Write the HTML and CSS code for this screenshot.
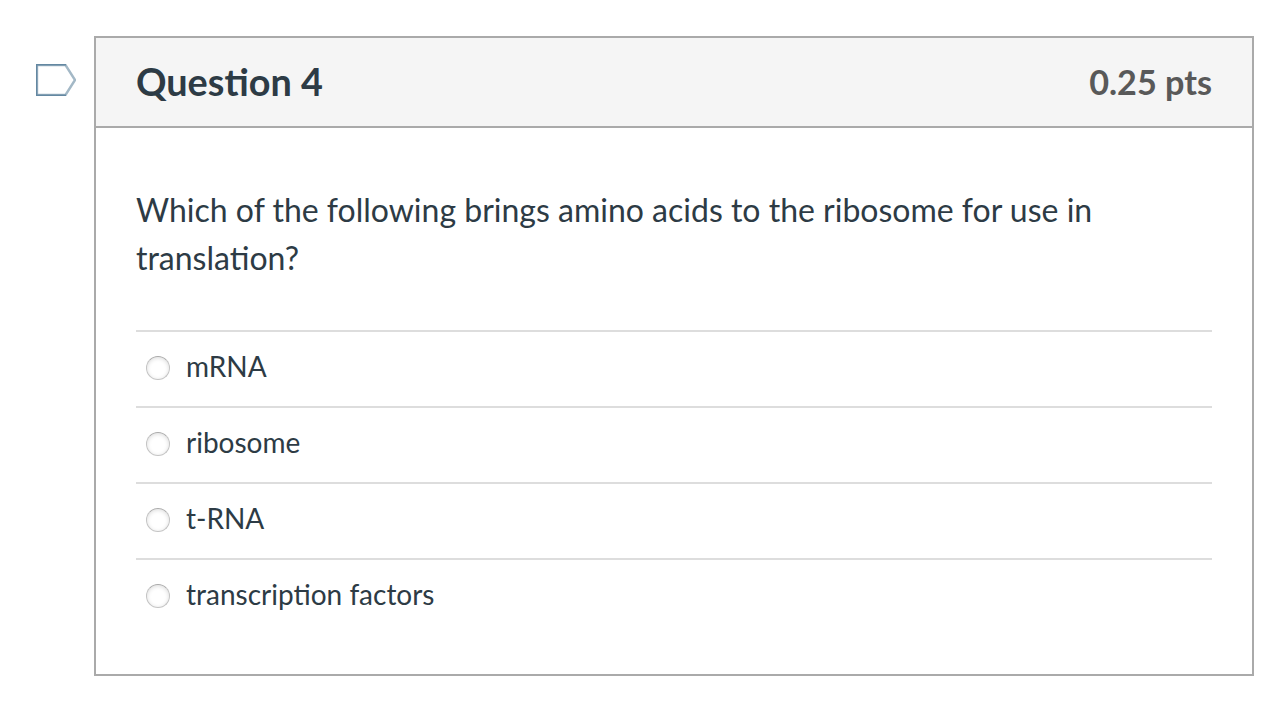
FILE: index.html
```
<!DOCTYPE html>
<html lang="en">
<head>
    <meta charset="UTF-8">
    <meta name="viewport" content="width=device-width, initial-scale=1.0">
    <title>Question 4</title>
    <link rel="stylesheet" href="styles.css">
</head>
<body>
    <div class="quiz">
        <svg class="flag" width="40" height="32" viewBox="0 0 40 32" aria-label="Flag question">
            <path d="M1 1H29.5L39 16L29.5 31H1Z" fill="#fff" stroke="#a3b8c6" stroke-width="2.4"/>
            <path d="M30 .7H.7V31.3H30" fill="none" stroke="#6488a2" stroke-width="1.4"/>
        </svg>
        <form class="question">
            <div class="header">
                <h1 class="name">Question 4</h1>
                <span class="points">0.25 pts</span>
            </div>
            <div class="text">
                <p class="question-text">Which of the following brings amino acids to the ribosome for use in translation?</p>
                <div class="answers">
                    <label class="answer"><input type="radio" name="answer" class="radio"><span>mRNA</span></label>
                    <label class="answer"><input type="radio" name="answer" class="radio"><span>ribosome</span></label>
                    <label class="answer"><input type="radio" name="answer" class="radio"><span>t-RNA</span></label>
                    <label class="answer"><input type="radio" name="answer" class="radio"><span>transcription factors</span></label>
                </div>
            </div>
        </form>
    </div>
</body>
</html>
```
FILE: styles.css
```
* {
    box-sizing: border-box;
}
body {
    margin: 0;
    background-color: #fff;
    color: #2d3b45;
    font-family: Lato, sans-serif;
}
.quiz {
    display: flex;
    align-items: flex-start;
    gap: 18px;
    padding: 36px 28px 0 36px;
}
.flag {
    flex: none;
    margin-top: 28px;
}
.question {
    flex: 1;
    height: 640px;
    border: 2px solid #aaa;
}
.header {
    display: flex;
    align-items: center;
    justify-content: space-between;
    height: 90px;
    padding: 0 40px 2px;
    background-color: #f5f5f5;
    border-bottom: 2px solid #aaa;
}
.name {
    margin: 0;
    font-size: 37.8px;
    font-weight: bold;
}
.points {
    color: #595959;
    font-size: 34.2px;
    font-weight: bold;
}
.text {
    padding: 58px 40px 0;
}
.question-text {
    margin: 0 0 48px;
    font-size: 32px;
    line-height: 48px;
}
.answer {
    display: flex;
    align-items: flex-start;
    gap: 16px;
    height: 76px;
    padding: 14px 0 0 10px;
    border-top: 2px solid #ddd;
    font-size: 28px;
    line-height: 40px;
}
.radio {
    appearance: none;
    width: 24px;
    height: 24px;
    margin: 10px 0 0;
    border: 1px solid #c4c4c4;
    border-top-color: #aaa;
    border-radius: 50%;
    background-color: #fff;
    box-shadow: inset 0 1px 4px rgba(0,0,0,0.14);
}
```
